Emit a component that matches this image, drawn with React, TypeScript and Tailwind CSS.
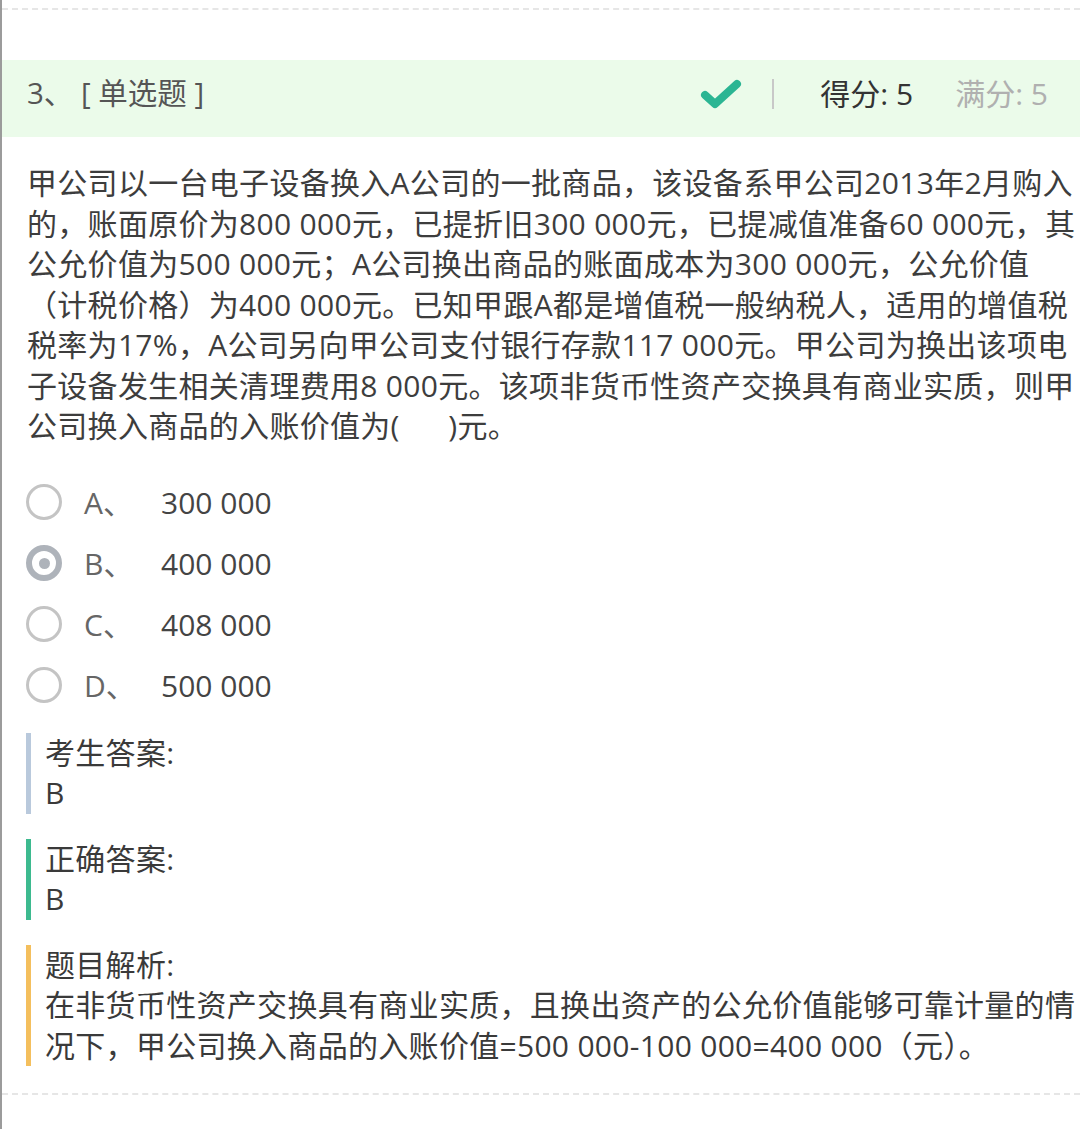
import React from "react";

const FONT = '"Open Sans", "Noto Sans CJK SC", sans-serif';

const lines = [
  "甲公司以一台电子设备换入A公司的一批商品，该设备系甲公司2013年2月购入",
  "的，账面原价为800 000元，已提折旧300 000元，已提减值准备60 000元，其",
  "公允价值为500 000元；A公司换出商品的账面成本为300 000元，公允价值",
  "（计税价格）为400 000元。已知甲跟A都是增值税一般纳税人，适用的增值税",
  "税率为17%，A公司另向甲公司支付银行存款117 000元。甲公司为换出该项电",
  "子设备发生相关清理费用8 000元。该项非货币性资产交换具有商业实质，则甲",
  "公司换入商品的入账价值为(\u00a0\u00a0\u00a0\u00a0\u00a0\u00a0)元。",
];

const options = [
  { k: "A、", v: "300 000", sel: false },
  { k: "B、", v: "400 000", sel: true },
  { k: "C、", v: "408 000", sel: false },
  { k: "D、", v: "500 000", sel: false },
];

function Radio({ sel }: { sel: boolean }) {
  if (sel) {
    return (
      <span className="flex h-[36px] w-[36px] items-center justify-center rounded-full border-[6px] border-[#aeb3ba]">
        <span className="h-[11px] w-[11px] rounded-full bg-[#aeb3ba]" />
      </span>
    );
  }
  return <span className="block h-[36px] w-[36px] rounded-full border-[3px] border-[#c4c4c4]" />;
}

function Block({ color, title, children }: { color: string; title: string; children: React.ReactNode }) {
  return (
    <div className="flex">
      <div className={`w-[5px] shrink-0 ${color}`} />
      <div className="pl-[14px] text-[30px] leading-[40.5px] tracking-[0.3px] text-[#3a3a3a]">
        <div>{title}</div>
        <div className="whitespace-nowrap">{children}</div>
      </div>
    </div>
  );
}

export default function App() {
  return (
    <div className="min-h-[1129px] bg-white border-l-2 border-[#9b9b9b]" style={{ fontFamily: FONT }}>
      <div className="pt-[8px]">
        <div className="border-t-2 border-dashed border-[#e6e6e6]" />
      </div>
      <div className="h-[50px]" />
      <div className="flex h-[77px] items-center bg-[#ebfbea] pb-[10px] pl-[25px] pr-[32px]">
        <div className="text-[29.5px] text-[#555]">3、 [ 单选题 ]</div>
        <div className="ml-auto flex items-center">
          <svg width="42" height="32" viewBox="0 0 42 32" className="mr-[30px]">
            <path d="M5 17 L15 26 L37 6" fill="none" stroke="#2bb593" strokeWidth="8" strokeLinecap="round" strokeLinejoin="round" />
          </svg>
          <div className="h-[30px] w-[2px] bg-[#c8c8c8]" />
          <div className="ml-[46px] text-[30px] text-[#333]">得分: 5</div>
          <div className="ml-[42px] text-[30px] text-[#b0b0b0]">满分: 5</div>
        </div>
      </div>
      <div className="pl-[25px] pt-[26px] text-[30px] leading-[40.5px] tracking-[0.3px] text-[#3d3d3d]">
        {lines.map((l, i) => (
          <div key={i} className="whitespace-nowrap">{l}</div>
        ))}
      </div>
      <div className="mt-[25px] flex flex-col pl-[24px]">
        {options.map((o) => (
          <div key={o.k} className="flex h-[61px] items-center">
            <Radio sel={o.sel} />
            <span className="ml-[22px] w-[77px] text-[30px] text-[#666]">{o.k}</span>
            <span className="text-[30px] text-[#444]">{o.v}</span>
          </div>
        ))}
      </div>
      <div className="mt-[17px] flex flex-col gap-[25px] pl-[24px] pr-[4px]">
        <Block color="bg-[#b9c9dc]" title="考生答案:">B</Block>
        <Block color="bg-[#3dba8f]" title="正确答案:">B</Block>
        <Block color="bg-[#f4bf5d]" title="题目解析:">
          在非货币性资产交换具有商业实质，且换出资产的公允价值能够可靠计量的情
          <br />
          况下，甲公司换入商品的入账价值=500 000-100 000=400 000（元）。
        </Block>
      </div>
      <div className="pt-[27px]">
        <div className="border-t-2 border-dashed border-[#e6e6e6]" />
      </div>
    </div>
  );
}
